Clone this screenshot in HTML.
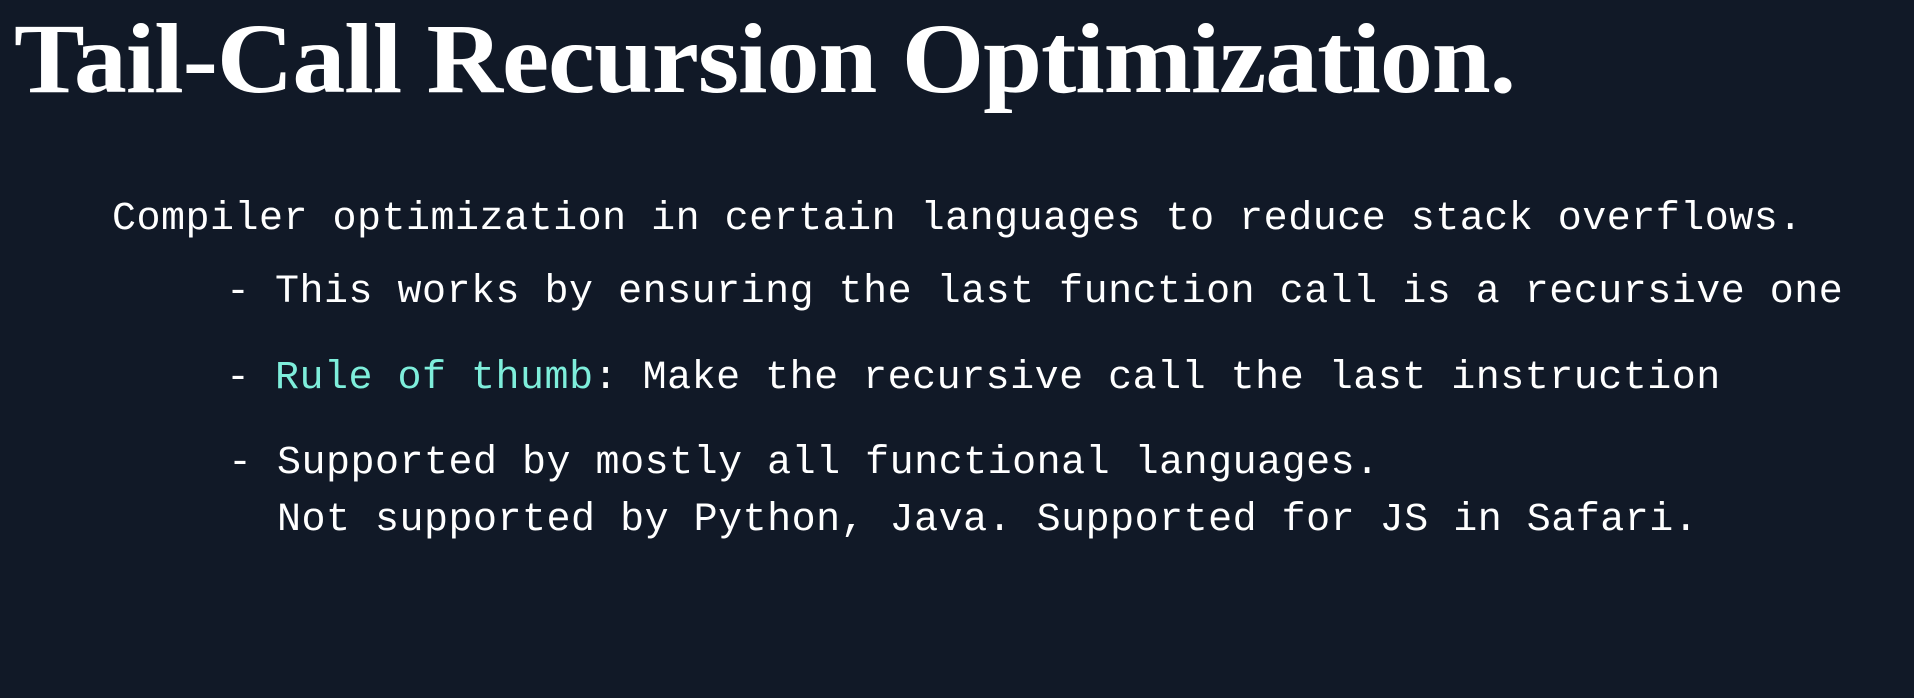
<!DOCTYPE html>
<html><head><meta charset="utf-8"><style>
html,body{margin:0;padding:0;}
body{width:1914px;height:698px;background:#111927;overflow:hidden;position:relative;color:#fff;}
.t{position:absolute;left:14px;top:1px;font-family:"Liberation Serif",serif;font-weight:bold;font-size:100px;white-space:nowrap;transform:scaleX(1.06);transform-origin:left top;letter-spacing:-1px;}
.m{position:absolute;font-family:"Liberation Mono",monospace;font-size:40px;letter-spacing:0.5px;white-space:pre;line-height:40px;}
.c{color:#7eeedb;}
</style></head><body>
<div class="t">Tail-Call Recursion Optimization.</div>
<div class="m" style="left:112px;top:200px">Compiler optimization in certain languages to reduce stack overflows.</div>
<div class="m" style="left:226px;top:273px">- This works by ensuring the last function call is a recursive one</div>
<div class="m" style="left:226px;top:359px">- <span class="c">Rule of thumb</span>: Make the recursive call the last instruction</div>
<div class="m" style="left:228px;top:444px">- Supported by mostly all functional languages.</div>
<div class="m" style="left:228px;top:501px">  Not supported by Python, Java. Supported for JS in Safari.</div>
</body></html>
